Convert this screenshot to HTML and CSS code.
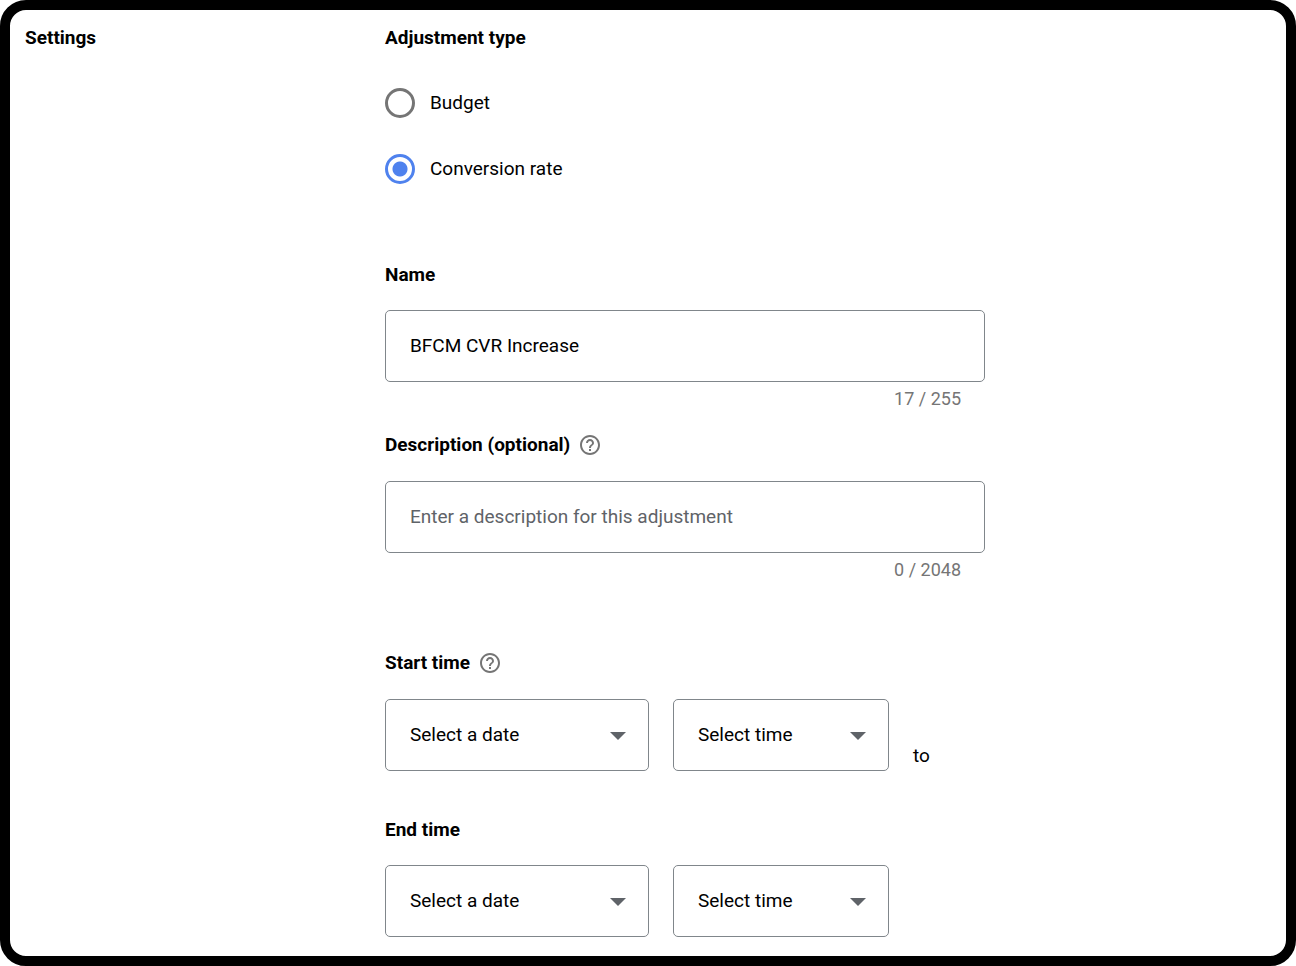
FILE: index.html
```html
<!DOCTYPE html>
<html lang="en">
<head>
<meta charset="utf-8">
<meta name="viewport" content="width=device-width, initial-scale=1">
<title>Settings</title>
<link rel="stylesheet" href="styles.css">
</head>
<body>
<main class="panel">
  <h1 class="heading">Settings</h1>
  <form class="form">
    <fieldset class="group radios">
      <legend class="heading">Adjustment type</legend>
      <label class="radio"><input type="radio" name="type" value="budget"><span>Budget</span></label>
      <label class="radio"><input type="radio" name="type" value="conversion" checked><span>Conversion rate</span></label>
    </fieldset>

    <div class="group name">
      <label class="heading" for="name">Name</label>
      <input class="box" id="name" type="text" value="BFCM CVR Increase" maxlength="255">
      <div class="counter">17 / 255</div>
    </div>

    <div class="group description">
      <div class="title">
        <label class="heading" for="description">Description (optional)</label>
        <button class="help" type="button" aria-label="Help with description">
          <svg viewBox="0 0 24 24" aria-hidden="true"><path d="M11 18h2v-2h-2v2zm1-16C6.480 2 2 6.480 2 12s4.480 10 10 10 10-4.480 10-10S17.520 2 12 2zm0 18c-4.410 0-8-3.590-8-8s3.590-8 8-8 8 3.590 8 8-3.590 8-8 8zm0-14c-2.210 0-4 1.790-4 4h2c0-1.100.9-2 2-2s2 .9 2 2c0 2-3 1.750-3 5h2c0-2.250 3-2.500 3-5 0-2.210-1.790-4-4-4z"/></svg>
        </button>
      </div>
      <input class="box" id="description" type="text" placeholder="Enter a description for this adjustment" maxlength="2048">
      <div class="counter">0 / 2048</div>
    </div>

    <div class="group start">
      <div class="title">
        <h2 class="heading">Start time</h2>
        <button class="help" type="button" aria-label="Help with start time">
          <svg viewBox="0 0 24 24" aria-hidden="true"><path d="M11 18h2v-2h-2v2zm1-16C6.480 2 2 6.480 2 12s4.480 10 10 10 10-4.480 10-10S17.520 2 12 2zm0 18c-4.410 0-8-3.590-8-8s3.590-8 8-8 8 3.590 8 8-3.590 8-8 8zm0-14c-2.210 0-4 1.790-4 4h2c0-1.100.9-2 2-2s2 .9 2 2c0 2-3 1.750-3 5h2c0-2.250 3-2.500 3-5 0-2.210-1.790-4-4-4z"/></svg>
        </button>
      </div>
      <div class="row">
        <div class="select date">
          <select class="box" aria-label="Start date"><option>Select a date</option></select>
          <svg class="arrow" viewBox="0 0 16 8" aria-hidden="true"><path d="M0 0h16L8 8z"/></svg>
        </div>
        <div class="select time">
          <select class="box" aria-label="Start hour"><option>Select time</option></select>
          <svg class="arrow" viewBox="0 0 16 8" aria-hidden="true"><path d="M0 0h16L8 8z"/></svg>
        </div>
        <span class="to">to</span>
      </div>
    </div>

    <div class="group end">
      <h2 class="heading">End time</h2>
      <div class="row">
        <div class="select date">
          <select class="box" aria-label="End date"><option>Select a date</option></select>
          <svg class="arrow" viewBox="0 0 16 8" aria-hidden="true"><path d="M0 0h16L8 8z"/></svg>
        </div>
        <div class="select time">
          <select class="box" aria-label="End hour"><option>Select time</option></select>
          <svg class="arrow" viewBox="0 0 16 8" aria-hidden="true"><path d="M0 0h16L8 8z"/></svg>
        </div>
      </div>
    </div>
  </form>
</main>
</body>
</html>
```
FILE: styles.css
```css
* {
  box-sizing: border-box;
}

body {
  margin: 0;
  background: #fff;
  color: #000;
  font: 400 19px/24px Roboto, "Liberation Sans", sans-serif;
}

.panel {
  display: grid;
  grid-template-columns: 360px minmax(0, 1fr);
  align-items: start;
  min-height: 100vh;
  padding: 16px 15px 19px;
  border: 10px solid #000;
  border-radius: 26px;
}

.heading {
  margin: 0;
  padding: 0;
  font-size: 19px;
  font-weight: 700;
  line-height: 24px;
}

.form {
  max-width: 600px;
}

.group {
  display: flex;
  flex-direction: column;
  min-width: 0;
  margin: 0;
  padding: 0;
  border: 0;
}

.radio {
  display: flex;
  align-items: center;
  align-self: flex-start;
  gap: 15px;
  margin-top: 36px;
}

legend + .radio {
  margin-top: 38px;
}

.radio input {
  appearance: none;
  width: 30px;
  height: 30px;
  margin: 0;
  border: 3px solid #757575;
  border-radius: 50%;
}

.radio input:checked {
  border-color: #4f82ee;
  background: radial-gradient(circle, #4f82ee 7px, transparent 8px);
}

.name {
  margin-top: 79px;
}

.description {
  margin-top: 22px;
}

.start {
  margin-top: 69px;
}

.end {
  margin-top: 47px;
}

.title {
  display: flex;
  align-items: center;
  gap: 8px;
}

.help {
  width: 24px;
  height: 24px;
  padding: 0;
  border: 0;
  background: none;
}

.help svg {
  display: block;
  fill: #757575;
}

.box {
  width: 100%;
  height: 72px;
  padding: 0 24px;
  border: 1px solid #80868b;
  border-radius: 5px;
  background: #fff;
  color: #000;
  font: inherit;
  appearance: none;
}

input.box {
  padding-bottom: 2px;
}

.title + .box {
  margin-top: 24px;
}

.heading + .box,
.heading + .row {
  margin-top: 23px;
}

.box::placeholder {
  color: #5f6368;
  opacity: 1;
}

.counter {
  margin-top: 5px;
  padding-right: 24px;
  color: #757575;
  font-size: 18px;
  text-align: right;
}

.row {
  display: flex;
  align-items: center;
  gap: 24px;
}

.title + .row {
  margin-top: 24px;
}

.select {
  position: relative;
}

.date {
  width: 264px;
}

.time {
  width: 216px;
}

.arrow {
  position: absolute;
  top: 33px;
  right: 23px;
  width: 16px;
  height: 8px;
  fill: #5f6368;
  pointer-events: none;
}

.to {
  align-self: flex-end;
  padding-bottom: 3px;
}
```
